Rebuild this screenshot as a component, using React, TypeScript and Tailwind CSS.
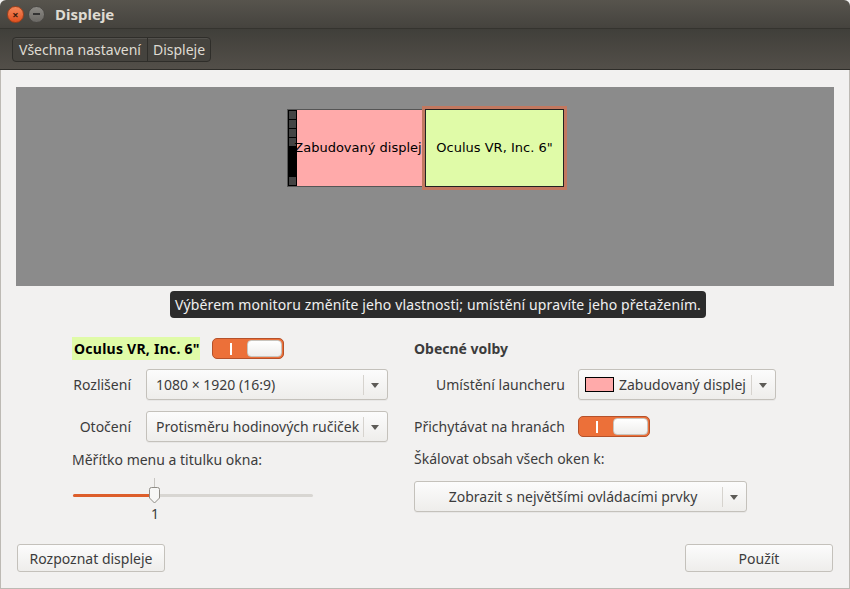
import React from 'react';

const font = { fontFamily: '"Noto Sans", "Open Sans", sans-serif' };

const Arrow: React.FC = () => (
  <span className="flex h-full items-center">
    <span className="h-[20px] w-px bg-[#d6d3ce]" />
    <svg width="22" height="10" viewBox="0 0 22 10">
      <path d="M7 3 L15 3 L11 8 Z" fill="#5d5b57" />
    </svg>
  </span>
);

const Combo: React.FC<{ className?: string; center?: boolean; children: React.ReactNode }> = ({
  className = '',
  center,
  children,
}) => (
  <div
    className={`flex h-[31px] items-center rounded-[3px] border border-[#c4c1bb] bg-gradient-to-b from-[#fcfcfc] to-[#eeedeb] pr-[1px] text-[14px] text-[#3c3c3c] shadow-[0_1px_0_rgba(0,0,0,0.04)] ${className}`}
  >
    <div className={`flex min-w-0 flex-1 items-center overflow-hidden whitespace-nowrap ${center ? 'justify-center' : ''}`}>
      {children}
    </div>
    <Arrow />
  </div>
);

const Switch: React.FC = () => (
  <div className="flex h-[21px] w-[72px] items-center rounded-[5px] border border-[#b5512a] bg-[#ec7039] p-[1px]">
    <div className="flex flex-1 justify-center">
      <span className="h-[12px] w-[2px] bg-white" />
    </div>
    <div className="h-full w-[35px] rounded-[4px] border border-[#c8c4bd] bg-gradient-to-b from-white to-[#efeeec]" />
  </div>
);

const Button: React.FC<{ children: React.ReactNode }> = ({ children }) => (
  <div className="flex h-[28px] w-[148px] items-center justify-center rounded-[3px] border border-[#c4c1bb] bg-gradient-to-b from-[#fcfcfc] to-[#eeedeb] text-[14px] text-[#3c3c3c]">
    {children}
  </div>
);

export default function App() {
  return (
    <div className="flex h-[589px] w-[850px] flex-col overflow-hidden bg-[#f2f1f0]" style={font}>
      {/* title bar */}
      <div className="flex h-[29px] items-center rounded-t-[6px] bg-gradient-to-b from-[#57544d] to-[#45433e] pl-[7px] border-b border-[#35342f]">
        <div className="flex h-[17px] w-[17px] items-center justify-center rounded-full bg-gradient-to-b from-[#f48759] to-[#e0501e] border border-[#a3401a] text-[11px] font-bold leading-none text-[#3b1c0e]">
          ×
        </div>
        <div className="ml-[4px] flex h-[17px] w-[17px] items-center justify-center rounded-full bg-gradient-to-b from-[#8c8a85] to-[#6a6864] border border-[#4a4844]">
          <span className="h-[2px] w-[7px] bg-[#333]" />
        </div>
        <span className="ml-[10px] text-[15px] font-bold text-[#dfdbd2]">Displeje</span>
      </div>

      {/* toolbar */}
      <div className="flex h-[41px] items-center bg-gradient-to-b from-[#403f3a] to-[#534f49] pl-[12px] border-b border-[#2e2d29]">
        <div className="flex h-[25px] items-stretch rounded-[4px] border border-[#2f2e2a] bg-[#45433e] text-[14px] text-[#dfdbd2] shadow-[inset_0_1px_0_rgba(255,255,255,0.08)]">
          <span className="flex items-center px-[6px]">Všechna nastavení</span>
          <span className="w-px bg-[#2f2e2a]" />
          <span className="flex items-center px-[5px]">Displeje</span>
        </div>
      </div>

      {/* content */}
      <div className="flex flex-1 flex-col border-x border-b border-[#bdbab4] px-[15px] pt-[17px]">
        <div className="relative">
          <div className="flex h-[199px] justify-center bg-[#8b8b8b] pl-[4px] pt-[19px]">
            <div className="flex h-[84px] items-center" style={{ fontFamily: '"DejaVu Sans", sans-serif' }}>
              <div className="flex h-[78px] w-[138px] border border-[#555] bg-[#ffaaaa]">
                <div className="flex w-[9px] flex-col gap-[1px] bg-black p-px">
                  <span className="h-[8px] bg-[#444]" />
                  <span className="h-[8px] bg-[#444]" />
                  <span className="h-[8px] bg-[#444]" />
                  <span className="h-[8px] bg-[#444]" />
                  <span className="flex-1" />
                  <span className="h-[8px] bg-[#444]" />
                </div>
                <div className="-ml-[5px] flex flex-1 items-center justify-center overflow-hidden whitespace-nowrap text-[13px] text-black">
                  Zabudovaný displej
                </div>
              </div>
              <div className="-ml-[3px] flex h-[84px] w-[145px] border-[3px] border-[#c27860]">
                <div className="flex flex-1 items-center justify-center border border-[#222] bg-[#e0fba8] text-[13px] text-black">
                  Oculus VR, Inc. 6"
                </div>
              </div>
            </div>
          </div>
          <div className="absolute left-[154px] top-[204px] z-10 flex h-[27px] items-center rounded-[4px] bg-[#2c2c2c] px-[5px] text-[14px] tracking-[0.13px] text-[#f0f0f0]">
            Výběrem monitoru změníte jeho vlastnosti; umístění upravíte jeho přetažením.
          </div>
        </div>

        <div className="mt-[51px] flex pl-[56px]">
          {/* left column */}
          <div className="flex w-[316px] flex-col">
            <div className="flex h-[23px] items-center">
              <span className="flex h-[23px] w-[128px] items-center bg-[#e0fba8] pl-[2px] text-[14px] font-bold tracking-[0.25px] text-black">
                Oculus VR, Inc. 6"
              </span>
              <div className="ml-[12px]">
                <Switch />
              </div>
            </div>
            <div className="mt-[9px] flex items-center">
              <span className="w-[59px] text-right text-[14px] text-[#3c3c3c]">Rozlišení</span>
              <Combo className="ml-[15px] w-[242px] pl-[9px]">1080 × 1920 (16:9)</Combo>
            </div>
            <div className="mt-[11px] flex items-center">
              <span className="w-[59px] text-right text-[14px] text-[#3c3c3c]">Otočení</span>
              <Combo className="ml-[15px] w-[242px] pl-[9px]">Protisměru hodinových ručiček</Combo>
            </div>
            <div className="mt-[8px] text-[14px] leading-[20px] text-[#3c3c3c]">Měřítko menu a titulku okna:</div>
            <div className="relative mt-[8px] h-[26px] w-[241px] pl-[1px]">
              <div className="absolute left-[82px] top-0 h-[10px] w-px bg-[#c8c6c2]" />
              <div className="absolute left-[1px] right-0 top-[16px] h-[3px] rounded-full bg-[#d8d6d2]" />
              <div className="absolute left-[1px] top-[16px] h-[3px] w-[80px] rounded-full bg-[#dd5e2b]" />
              <svg className="absolute left-[76px] top-[9px]" width="13" height="17" viewBox="0 0 13 17">
                <path d="M1.5 2.5 Q1.5 0.5 3.5 0.5 L9.5 0.5 Q11.5 0.5 11.5 2.5 L11.5 11 L6.5 16 L1.5 11 Z" fill="#f7f7f6" stroke="#8f8c86" />
              </svg>
            </div>
            <div className="-mt-[1px] w-[166px] text-center text-[14px] text-[#3c3c3c]">1</div>
          </div>

          {/* right column */}
          <div className="ml-[26px] flex w-[362px] flex-col">
            <div className="flex h-[23px] items-center text-[14px] font-bold text-[#3c3c3c]">Obecné volby</div>
            <div className="mt-[9px] flex items-center">
              <span className="w-[151px] text-right text-[14px] text-[#3c3c3c]">Umístění launcheru</span>
              <Combo className="ml-[13px] w-[198px] pl-[6px]">
                <span className="mr-[5px] h-[15px] w-[29px] shrink-0 border border-black bg-[#ffaaaa]" />
                Zabudovaný displej
              </Combo>
            </div>
            <div className="mt-[16px] flex items-center">
              <span className="w-[151px] text-[14px] text-[#3c3c3c]">Přichytávat na hranách</span>
              <div className="ml-[13px]">
                <Switch />
              </div>
            </div>
            <div className="mt-[12px] text-[14px] leading-[20px] text-[#3c3c3c]">Škálovat obsah všech oken k:</div>
            <Combo className="mt-[12px] w-[333px] pl-[9px]" center>
              Zobrazit s největšími ovládacími prvky
            </Combo>
          </div>
        </div>

        <div className="mt-auto mb-[16px] flex justify-between pl-[1px] pr-[1px]">
          <Button>Rozpoznat displeje</Button>
          <Button>Použít</Button>
        </div>
      </div>
    </div>
  );
}
